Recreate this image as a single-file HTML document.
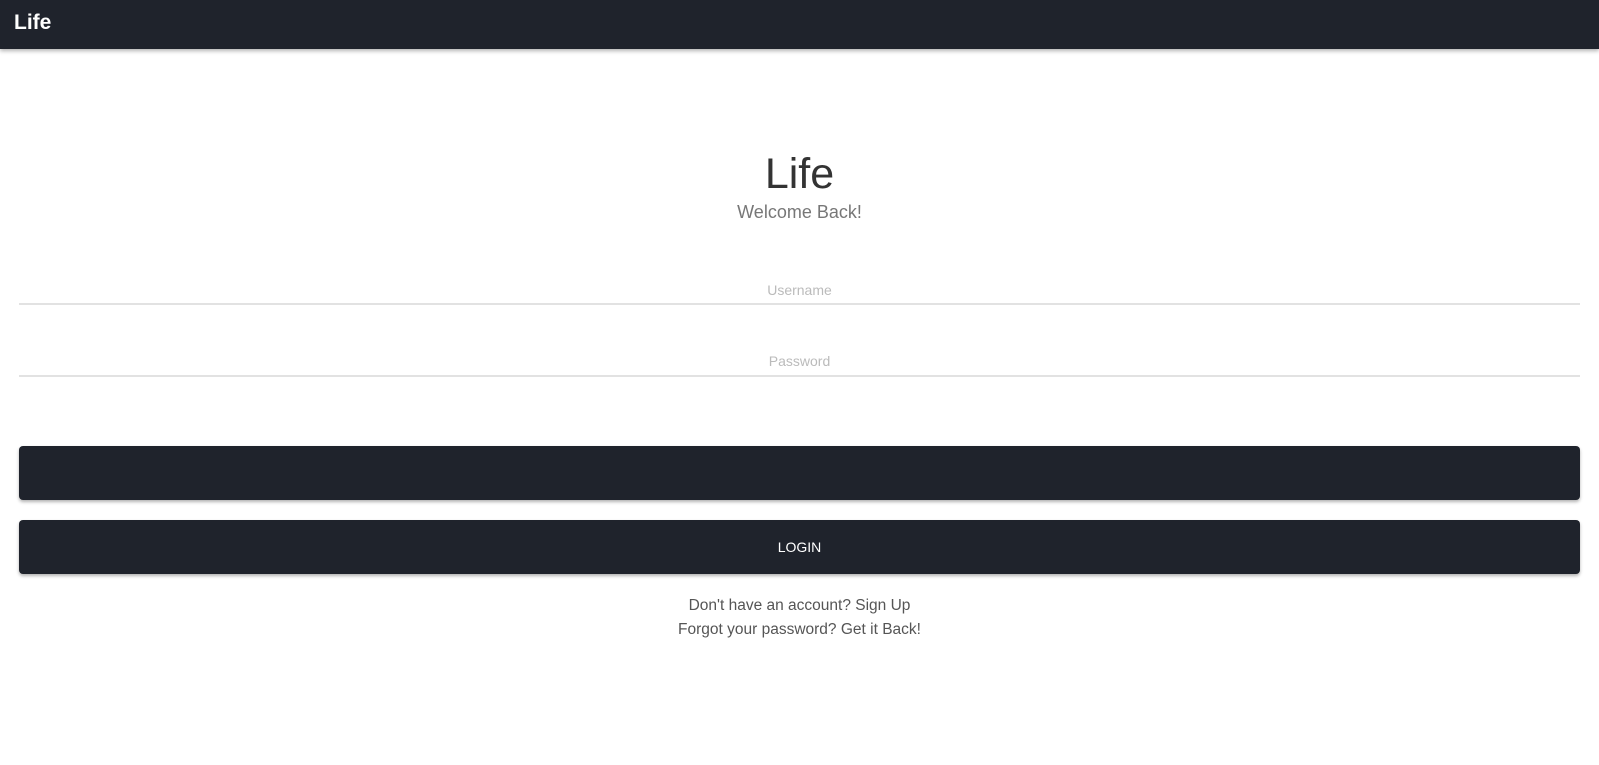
<!DOCTYPE html>
<html><head><meta charset="utf-8"><style>
*{margin:0;padding:0;box-sizing:border-box}
body{width:1599px;height:765px;background:#fff;font-family:"Liberation Sans",sans-serif;position:relative;overflow:hidden}
.nav{position:absolute;left:0;top:0;width:1599px;height:49px;background:#1f232c;box-shadow:0 2px 4px rgba(0,0,0,.3)}
.nav span{position:absolute;left:14px;top:11px;color:#fff;font-weight:bold;font-size:21px}
.c{position:absolute;left:0;width:1599px;text-align:center}
.line{position:absolute;left:19px;width:1561px;height:2px;background:#e2e2e2}
.btn{position:absolute;left:19px;width:1561px;height:54px;background:#1f232c;border-radius:4px;box-shadow:0 2px 3px rgba(0,0,0,.3);color:#fff;font-size:14px;text-align:center;line-height:54px}
</style></head><body>
<div class="nav"><span>Life</span></div>
<div class="c" style="top:150px;font-size:43px;color:#333">Life</div>
<div class="c" style="top:202px;font-size:18px;color:#777">Welcome Back!</div>
<div class="c" style="top:282px;font-size:14px;color:#bbb">Username</div>
<div class="line" style="top:303px"></div>
<div class="c" style="top:353px;font-size:14px;color:#bbb">Password</div>
<div class="line" style="top:375px"></div>
<div class="btn" style="top:446px"></div>
<div class="btn" style="top:520px">LOGIN</div>
<div class="c" style="top:597px;font-size:15.5px;color:#555">Don't have an account? Sign Up</div>
<div class="c" style="top:621px;font-size:15.5px;color:#555">Forgot your password? Get it Back!</div>
</body></html>
